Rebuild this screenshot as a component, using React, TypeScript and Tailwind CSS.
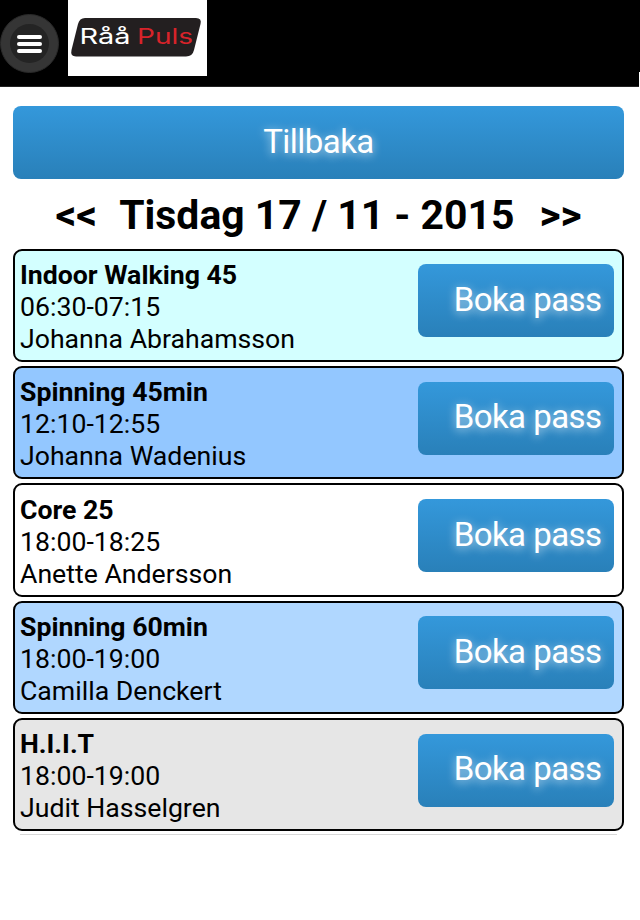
type Session = {
  title: string;
  time: string;
  trainer: string;
  color: string;
};

const sessions: Session[] = [
  { title: "Indoor Walking 45", time: "06:30-07:15", trainer: "Johanna Abrahamsson", color: "bg-[#d3ffff]" },
  { title: "Spinning 45min", time: "12:10-12:55", trainer: "Johanna Wadenius", color: "bg-[#93c7ff]" },
  { title: "Core 25", time: "18:00-18:25", trainer: "Anette Andersson", color: "bg-white" },
  { title: "Spinning 60min", time: "18:00-19:00", trainer: "Camilla Denckert", color: "bg-[#b0d7ff]" },
  { title: "H.I.I.T", time: "18:00-19:00", trainer: "Judit Hasselgren", color: "bg-[#e6e6e6]" },
];

const buttonStyle =
  "block h-[73px] rounded-[8px] bg-linear-to-b from-[#3498db] to-[#2980b9] pb-[3px] text-[33px] leading-none tracking-[-0.55px] text-white [text-shadow:0px_2px_10px_rgba(255,255,255,0.7)]";

function Logo() {
  return (
    <svg className="block h-[76px] w-[139px] bg-white" viewBox="0 0 139 76">
      <path
        d="M17 18H128Q134 18 132.500 24L126 50Q124.500 56.500 118 56.500H8Q2 56.500 3.500 50L10 24Q11.500 18 17 18Z"
        fill="#231f20"
      />
      <g fontFamily="Inter, 'Liberation Sans', sans-serif" fontSize="21">
        <text x="11.500" y="44.400" fill="#fff" textLength="51" lengthAdjust="spacingAndGlyphs">
          Råå
        </text>
        <text x="69" y="44.400" fill="#d8232a" textLength="56" lengthAdjust="spacingAndGlyphs">
          Puls
        </text>
      </g>
    </svg>
  );
}

function Header() {
  return (
    <header className="flex h-[87px] items-start border-b border-[#222] bg-black">
      <button className="mt-[14px] flex size-[59px] items-center justify-center rounded-full border border-[#292929] bg-[#353535]">
        <span className="flex size-[39px] flex-col items-center justify-center gap-[3px] rounded-full bg-[#242424]">
          <span className="h-1 w-[25px] rounded-full bg-white" />
          <span className="h-1 w-[25px] rounded-full bg-white" />
          <span className="h-1 w-[25px] rounded-full bg-white" />
        </span>
      </button>
      <div className="ml-[9px]">
        <Logo />
      </div>
      <div className="mt-[72px] ml-auto h-[15px] w-px bg-white" />
    </header>
  );
}

function SessionCard({ session }: { session: Session }) {
  return (
    <li
      className={`flex h-[113.3px] justify-between rounded-[9px] border-2 border-black pt-[8.300px] pr-[8px] pl-[5px] ${session.color}`}
    >
      <div className="text-[26.670px] leading-8">
        <h2 className="font-bold">{session.title}</h2>
        <p>{session.time}</p>
        <p>{session.trainer}</p>
      </div>
      <button className={`${buttonStyle} mt-[5.500px] w-[196px] pr-[12.500px] text-right`}>Boka pass</button>
    </li>
  );
}

export default function App() {
  return (
    <div className="h-[920px] w-[640px] overflow-hidden bg-white font-[Roboto,sans-serif] text-black">
      <Header />
      <main className="mr-4 ml-[13px] pt-[19.400px]">
        <button className={`${buttonStyle} w-full text-center`}>Tillbaka</button>
        <div className="flex h-[69.300px] items-center pt-[3px] pl-[42.500px] text-[40.900px] font-bold whitespace-nowrap">
          <button>&lt;&lt;</button>
          <h1 className="ml-[22px]">Tisdag 17 / 11 - 2015</h1>
          <button className="ml-[25px]">&gt;&gt;</button>
        </div>
        <ul className="flex flex-col gap-[4px]">
          {sessions.map((session) => (
            <SessionCard key={session.title} session={session} />
          ))}
        </ul>
        <div className="mx-[7px] mt-[3px] h-px bg-[#d8d8d8]" />
      </main>
    </div>
  );
}
